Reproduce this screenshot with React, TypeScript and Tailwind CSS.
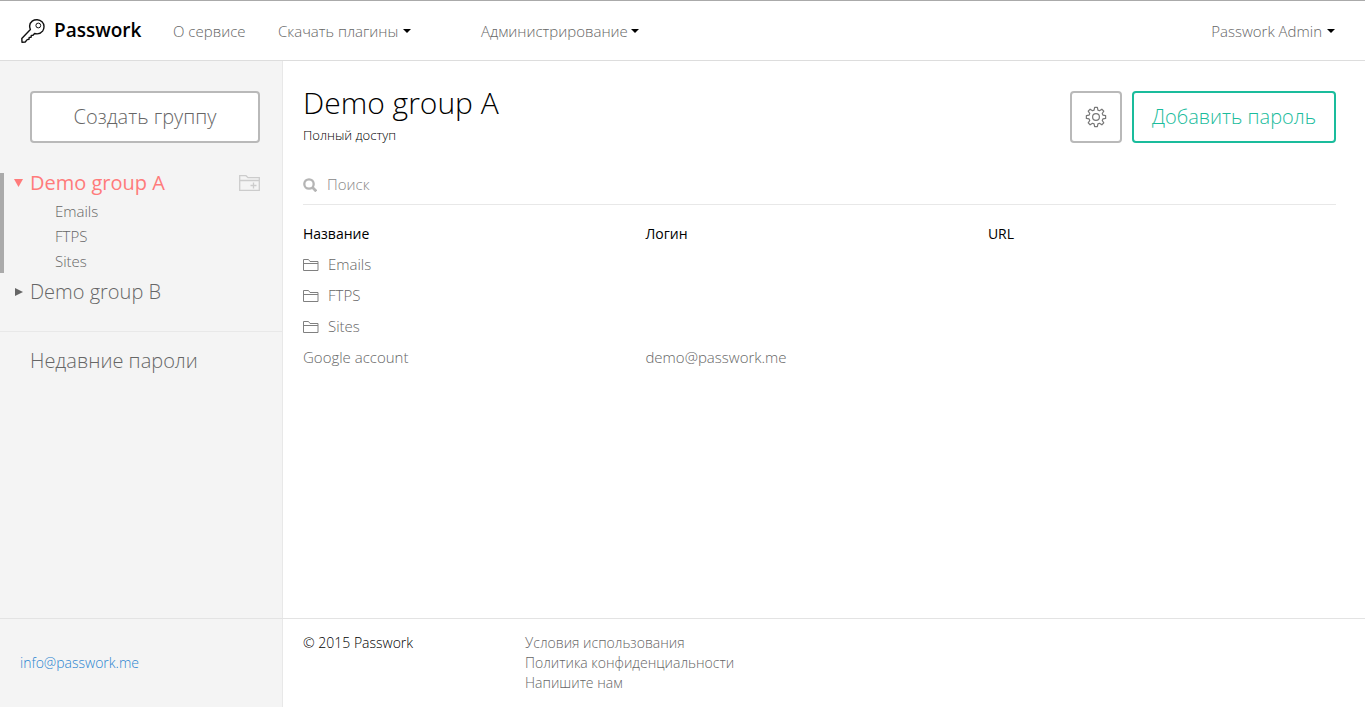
import { useState } from 'react';

const folders = ['Emails', 'FTPS', 'Sites'];

const passwords = [{ name: 'Google account', login: 'demo@passwork.me', url: '' }];

const Caret = () => (
  <svg className="w-2 h-1 shrink-0" viewBox="0 0 8 4" fill="#000" aria-hidden="true">
    <path d="M0 0h8L4 4z" />
  </svg>
);

const KeyIcon = () => (
  <svg className="w-6 h-6 shrink-0" viewBox="0 0 24 24" fill="none" stroke="#111" strokeWidth="1.4" strokeLinejoin="round" aria-hidden="true">
    <path d="M9.400 10.400C8 7 8.800 3.900 11.200 2.100C14.200 .1 18.400 .3 21 2.800C23.500 5.300 23.600 9.300 21.600 12.100C19.700 14.600 16.700 15.300 13.600 14.500L12 16.200L10.300 16.400L10.100 18.200L8.200 18.400L8 20.200L6.200 20.600L4.200 23L1 23.200L.8 19.400Z" />
    <circle cx="17.300" cy="6.500" r="2.400" strokeWidth="1" />
  </svg>
);

const FolderIcon = () => (
  <svg className="w-4 h-3 shrink-0" viewBox="0 0 16 12" fill="none" stroke="#808080" aria-hidden="true">
    <path d="M.5 11.500V.5h5l1.500 2h8v9zM.5 4.500h14.500" />
  </svg>
);

const AddFolderIcon = () => (
  <svg className="w-[21px] h-4" viewBox="0 0 21 16" fill="none" stroke="#ccc" strokeWidth="1.300" aria-hidden="true">
    <path d="M.7 15.300V.7h6.300l2 2h11.300v12.600zM.7 5.500h19.600M11.500 10.500h6M14.500 7.500v6" />
  </svg>
);

const GearIcon = () => (
  <svg className="w-[22px] h-[22px]" viewBox="0 0 24 24" fill="none" stroke="#777" strokeWidth="1.3" strokeLinejoin="round" aria-hidden="true">
    <path d="M10.500 1.500h3l.6 3 1.700.7 2.600-1.700 2.100 2.100-1.700 2.600.7 1.700 3 .6v3l-3 .6-.7 1.700 1.700 2.600-2.100 2.100-2.600-1.700-1.700.7-.6 3h-3l-.6-3-1.700-.7-2.600 1.700-2.100-2.100 1.700-2.600-.7-1.700-3-.6v-3l3-.6.7-1.700-1.700-2.600 2.100-2.100 2.600 1.700 1.700-.7z" />
    <circle cx="12" cy="12" r="3.700" />
  </svg>
);

const SearchIcon = () => (
  <svg className="w-[14px] h-[14px] shrink-0" viewBox="0 0 14 14" fill="none" stroke="#b5b5b5" strokeWidth="2.300" aria-hidden="true">
    <circle cx="6" cy="6" r="4.700" />
    <path d="M9.300 9.300l4 4" strokeWidth="2.800" />
  </svg>
);

export default function App() {
  const [open, setOpen] = useState(true);
  const [query, setQuery] = useState('');

  const matches = (name: string) => name.toLowerCase().includes(query.toLowerCase());

  return (
    <div className="min-h-screen flex flex-col bg-white font-['Open_Sans','Noto_Sans',sans-serif] font-light text-[15px] text-[#666]">
      {/* Header */}
      <header className="h-[61px] flex items-center border-t border-t-[#aaa] border-b border-b-[#ddd] pl-[21px] pr-[30px]">
        <a href="#" className="flex items-center w-[152px] gap-[9px] text-[19px] font-semibold text-black">
          <KeyIcon />
          Passwork
        </a>
        <nav className="flex items-center flex-1 pt-px">
          <a href="#" className="w-[105px]">О сервисе</a>
          <button className="flex items-center gap-[5px] w-[203px]">
            Скачать плагины
            <Caret />
          </button>
          <button className="flex items-center gap-[3px]">
            Администрирование
            <Caret />
          </button>
        </nav>
        <button className="flex items-center gap-[5px] pt-px">
          Passwork Admin
          <Caret />
        </button>
      </header>

      <div className="flex flex-1">
        {/* Sidebar */}
        <aside className="w-[283px] shrink-0 bg-[#f4f4f4] border-r border-[#e8e8e8] pt-[30px]">
          <div className="pl-[30px] pr-[22px]">
            <button className="w-full h-[52px] bg-white border-2 border-[#b9b9b9] rounded text-xl">
              Создать группу
            </button>
          </div>

          <div className="mt-[30px] border-l-4 border-[#aaa] pl-[10px] pr-[22px]">
            <div className="h-5 flex items-center">
              <button
                className="flex items-center gap-[7px] text-xl leading-5 font-normal text-[#ff7b7b]"
                aria-expanded={open}
                onClick={() => setOpen(!open)}
              >
                <svg className="w-[9px] h-2" viewBox="0 0 9 8" fill="currentColor" aria-hidden="true">
                  <path d={open ? 'M0 0h9L4.500 8z' : 'M1 0l8 4-8 4z'} />
                </svg>
                Demo group A
              </button>
              <button className="ml-auto" aria-label="Добавить папку">
                <AddFolderIcon />
              </button>
            </div>
            {open && (
              <ul className="pt-[5px] pl-[41px]">
                {folders.map((name) => (
                  <li key={name} className="h-[25px] leading-[27px]">
                    <a href="#">{name}</a>
                  </li>
                ))}
              </ul>
            )}
          </div>

          <div className="mt-[9px] pl-[14px] pb-[29px] border-b border-[#e8e8e8]">
            <button className="flex items-center gap-[7px] text-xl leading-5" aria-expanded={false}>
              <svg className="w-[9px] h-2" viewBox="0 0 9 8" fill="currentColor" aria-hidden="true">
                <path d="M1 0l8 4-8 4z" />
              </svg>
              Demo group B
            </button>
          </div>
          <a href="#" className="block mt-[15px] pl-[30px] text-xl">Недавние пароли</a>
        </aside>

        {/* Group contents */}
        <main className="flex-1 pt-[30px] pl-5 pr-[29px]">
          <div className="flex items-start gap-[10px]">
            <div className="flex-1 text-black">
              <h1 className="text-[30px] leading-6">Demo group A</h1>
              <p className="mt-3 text-[13px] leading-4">Полный доступ</p>
            </div>
            <button className="w-[52px] h-[52px] flex items-center justify-center border-2 border-[#b9b9b9] rounded" aria-label="Настройки">
              <GearIcon />
            </button>
            <button className="w-[204px] h-[52px] border-2 border-[#1abc9c] rounded text-xl text-[#1abc9c]">
              Добавить пароль
            </button>
          </div>

          <label className="mt-[22px] h-10 flex items-center gap-[10px] border-b border-[#e8e8e8]">
            <SearchIcon />
            <input
              className="flex-1 outline-none placeholder:text-[#888]"
              type="text"
              aria-label="Поиск"
              placeholder="Поиск"
              value={query}
              onChange={(e) => setQuery(e.target.value)}
            />
          </label>

          <table className="mt-[13px] w-full table-fixed text-left">
            <thead>
              <tr className="h-[31px] text-sm text-black">
                <th className="w-[33.15%] font-normal">Название</th>
                <th className="w-[33.15%] font-normal">Логин</th>
                <th className="font-normal">URL</th>
              </tr>
            </thead>
            <tbody>
              {folders.filter(matches).map((name) => (
                <tr key={name} className="h-[31px]">
                  <td>
                    <a href="#" className="flex items-center gap-[9px]">
                      <FolderIcon />
                      {name}
                    </a>
                  </td>
                  <td></td>
                  <td></td>
                </tr>
              ))}
              {passwords.filter((p) => matches(p.name)).map((p) => (
                <tr key={p.name} className="h-[31px]">
                  <td>{p.name}</td>
                  <td>{p.login}</td>
                  <td>{p.url}</td>
                </tr>
              ))}
            </tbody>
          </table>
        </main>
      </div>

      {/* Footer */}
      <footer className="flex h-[89px] border-t border-[#e3e3e3] text-sm leading-5">
        <div className="w-[283px] shrink-0 flex items-center pl-5 bg-[#f4f4f4] border-r border-[#e8e8e8]">
          <a href="#" className="text-[#2a84d0]">info@passwork.me</a>
        </div>
        <p className="w-[242px] pt-[14px] pl-5 text-black">© 2015 Passwork</p>
        <ul className="pt-[14px]">
          <li><a href="#">Условия использования</a></li>
          <li><a href="#">Политика конфиденциальности</a></li>
          <li><a href="#">Напишите нам</a></li>
        </ul>
      </footer>
    </div>
  );
}
